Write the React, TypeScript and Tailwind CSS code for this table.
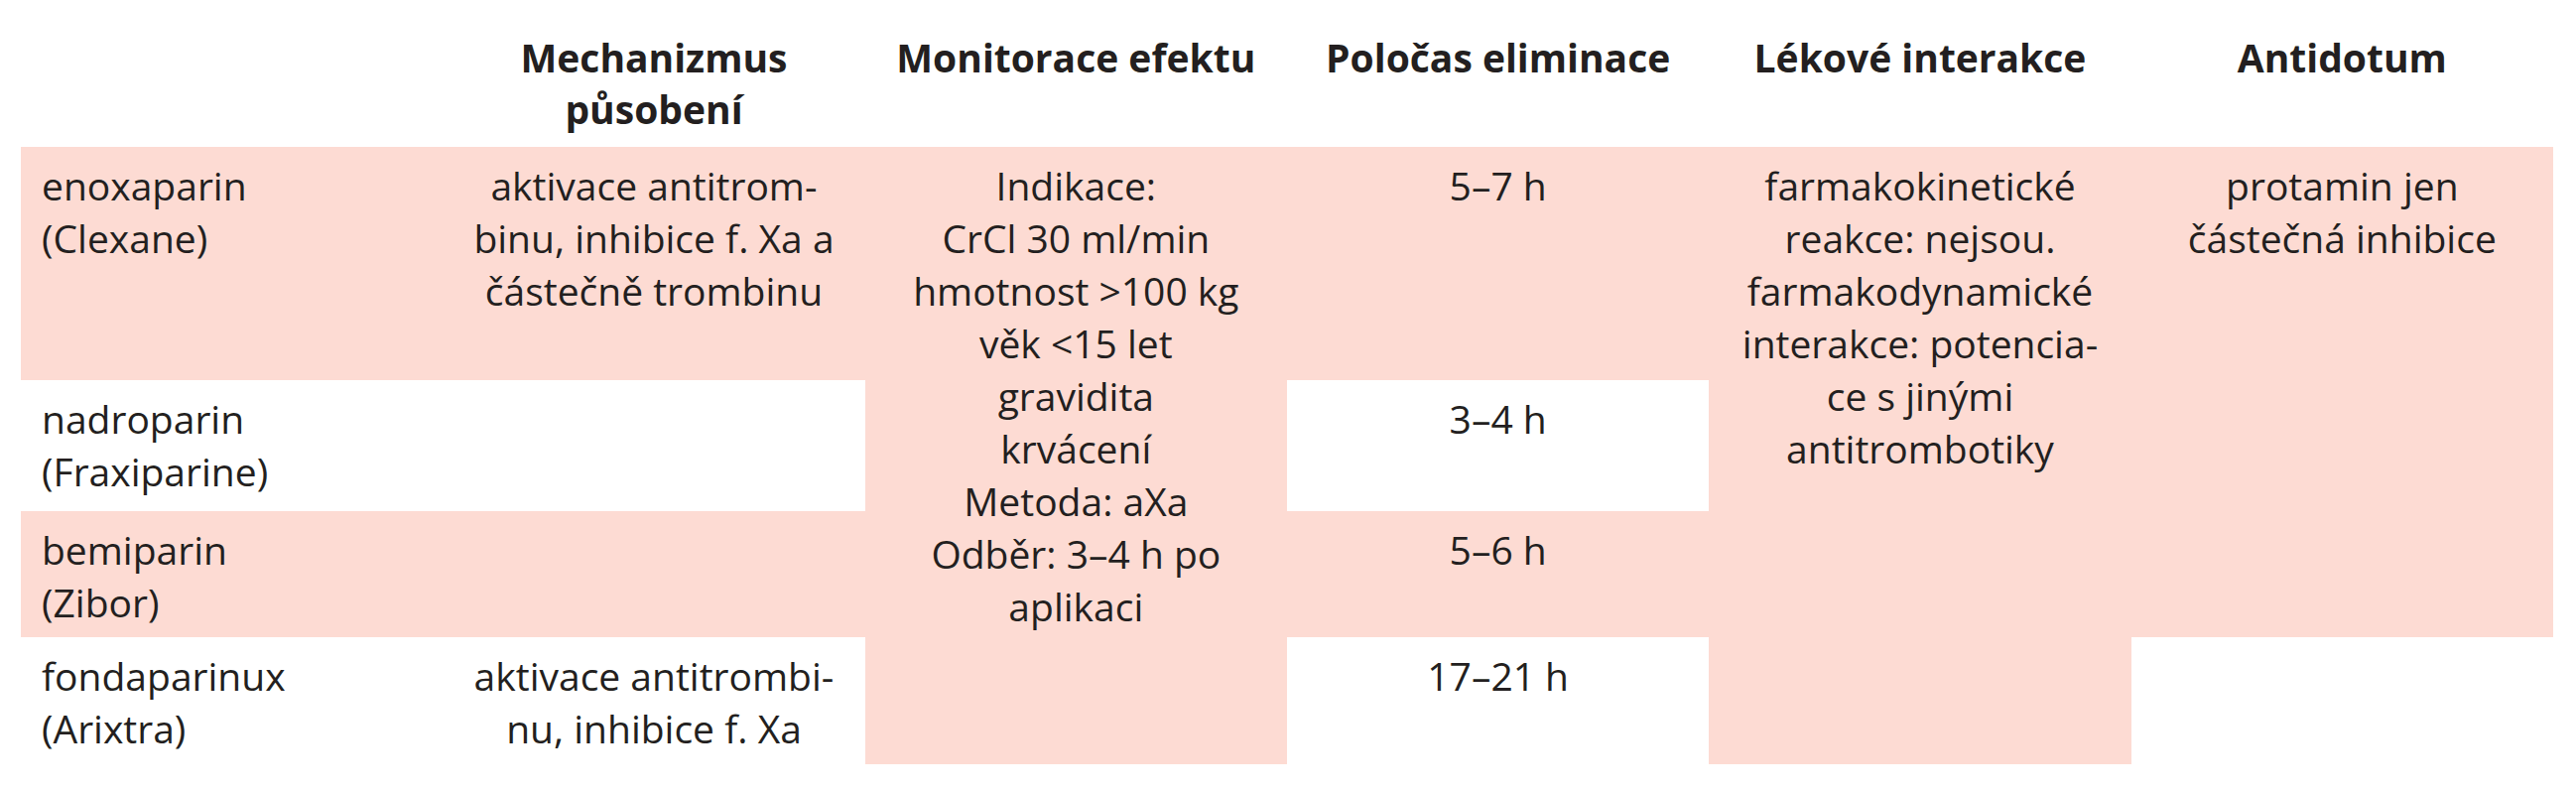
import React from 'react';

type CellProps = {
  place: string;
  pink?: boolean;
  left?: boolean;
  lines: string[];
};

// one body cell of the table, lines are broken by hand like in the print
const Cell = ({ place, pink, left, lines }: CellProps) => (
  <div
    className={`${place} ${pink ? 'bg-[#fddbd3]' : 'bg-white'} ${
      left ? 'text-left pl-[21px]' : 'text-center'
    } pt-[12px] text-[39px] leading-[53px]`}
  >
    {lines.map((l, i) => (
      <span key={i} className="block whitespace-nowrap">
        {l}
      </span>
    ))}
  </div>
);

const Head = ({ place, lines }: { place: string; lines: string[] }) => (
  <div className={`${place} text-center pt-[32px] text-[39px] leading-[52px] font-bold`}>
    {lines.map((l, i) => (
      <span key={i} className="block whitespace-nowrap">
        {l}
      </span>
    ))}
  </div>
);

const App = () => {
  return (
    <div className="w-[2596px] h-[800px] bg-white text-[#231f20] font-['Open_Sans','Noto_Sans',sans-serif]">
      <div className="ml-[21px] w-[2552px] grid grid-cols-6 grid-rows-[148px_235px_132px_127px_128px]">
        {/* header */}
        <Head place="col-start-2 row-start-1" lines={['Mechanizmus', 'působení']} />
        <Head place="col-start-3 row-start-1" lines={['Monitorace efektu']} />
        <Head place="col-start-4 row-start-1" lines={['Poločas eliminace']} />
        <Head place="col-start-5 row-start-1" lines={['Lékové interakce']} />
        <Head place="col-start-6 row-start-1" lines={['Antidotum']} />

        {/* enoxaparin */}
        <Cell place="col-start-1 row-start-2" pink left lines={['enoxaparin', '(Clexane)']} />
        <Cell
          place="col-start-2 row-start-2"
          pink
          lines={['aktivace antitrom-', 'binu, inhibice f. Xa a', 'částečně trombinu']}
        />
        <Cell
          place="col-start-3 row-start-2 row-span-4"
          pink
          lines={[
            'Indikace:',
            'CrCl 30 ml/min',
            'hmotnost >100 kg',
            'věk <15 let',
            'gravidita',
            'krvácení',
            'Metoda: aXa',
            'Odběr: 3–4 h po',
            'aplikaci',
          ]}
        />
        <Cell place="col-start-4 row-start-2" pink lines={['5–7 h']} />
        <Cell
          place="col-start-5 row-start-2 row-span-4"
          pink
          lines={[
            'farmakokinetické',
            'reakce: nejsou.',
            'farmakodynamické',
            'interakce: potencia-',
            'ce s jinými',
            'antitrombotiky',
          ]}
        />
        <Cell
          place="col-start-6 row-start-2 row-span-3"
          pink
          lines={['protamin jen', 'částečná inhibice']}
        />

        {/* nadroparin */}
        <Cell place="col-start-1 row-start-3" left lines={['nadroparin', '(Fraxiparine)']} />
        <Cell place="col-start-2 row-start-3" lines={[]} />
        <Cell place="col-start-4 row-start-3" lines={['3–4 h']} />

        {/* bemiparin */}
        <Cell place="col-start-1 row-start-4" pink left lines={['bemiparin', '(Zibor)']} />
        <Cell place="col-start-2 row-start-4" pink lines={[]} />
        <Cell place="col-start-4 row-start-4" pink lines={['5–6 h']} />

        {/* fondaparinux */}
        <Cell place="col-start-1 row-start-5" left lines={['fondaparinux', '(Arixtra)']} />
        <Cell
          place="col-start-2 row-start-5"
          lines={['aktivace antitrombi-', 'nu, inhibice f. Xa']}
        />
        <Cell place="col-start-4 row-start-5" lines={['17–21 h']} />
        <Cell place="col-start-6 row-start-5" lines={[]} />
      </div>
    </div>
  );
};

export default App;
